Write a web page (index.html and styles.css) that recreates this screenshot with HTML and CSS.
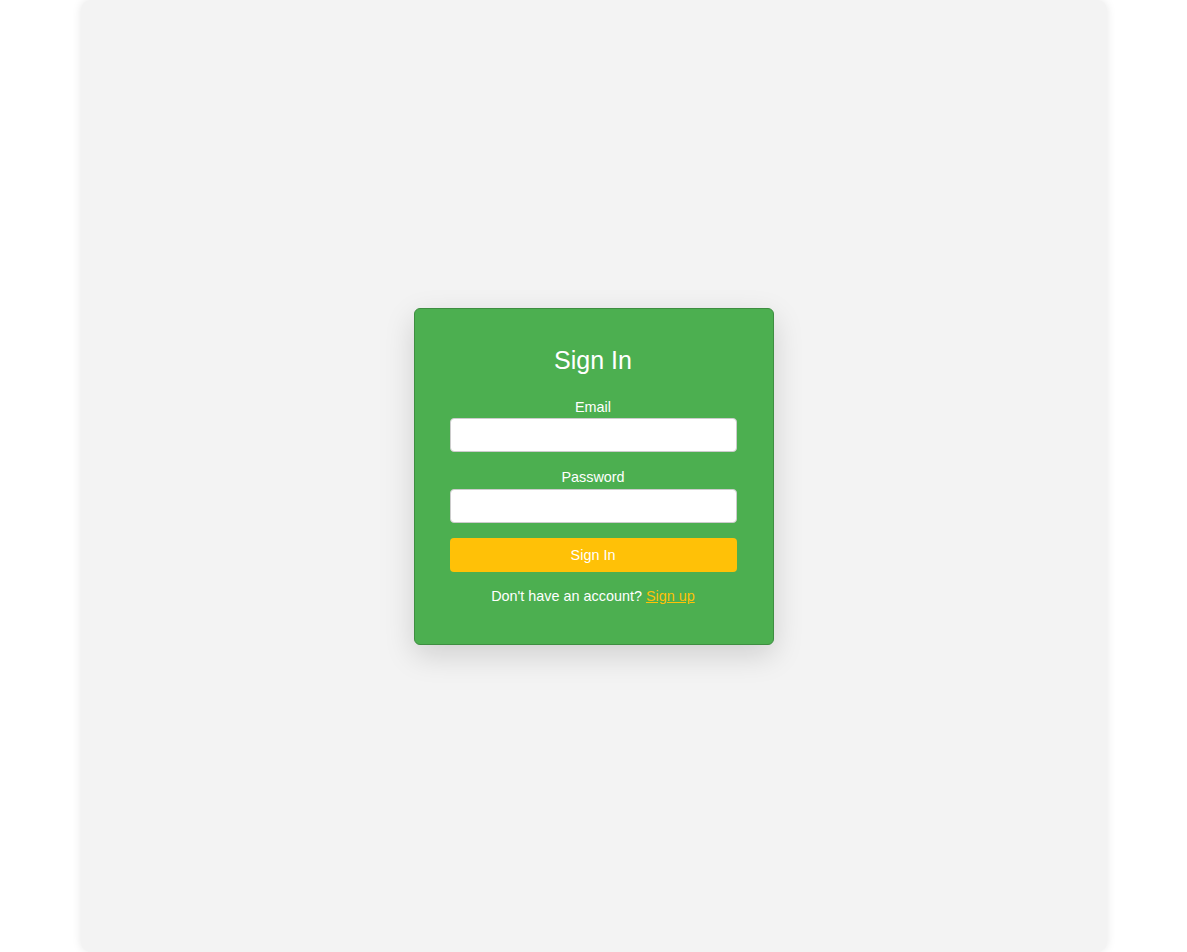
FILE: index.html
```html
<!DOCTYPE html>
<html lang="en">
<head>
<meta charset="utf-8">
<title>Sign In</title>
<link rel="stylesheet" href="styles.css">
</head>
<body>
<div class="page">
  <div class="card">
    <h2 class="title">Sign In</h2>
    <form class="form">
      <label class="label" for="email">Email</label>
      <input class="input input-email" id="email" type="email">
      <label class="label label-password" for="password">Password</label>
      <input class="input input-password" id="password" type="password">
      <button class="btn" type="button">Sign In</button>
    </form>
    <p class="footer">Don't have an account? <a class="link" href="#">Sign up</a></p>
  </div>
</div>
</body>
</html>
```
FILE: styles.css
```css
html, body {
  margin: 0;
  padding: 0;
  background: #ffffff;
  font-family: "Liberation Sans", Arial, sans-serif;
}
.page {
  width: 1026px;
  height: 952px;
  margin: 0 auto;
  background: #f3f3f3;
  border-radius: 10px;
  box-shadow: 0 0 10px rgba(0, 0, 0, 0.1);
  display: flex;
  align-items: center;
  justify-content: center;
}
.card {
  box-sizing: border-box;
  width: 360px;
  background: #4caf50;
  border: 1px solid #3e8e41;
  border-radius: 6px;
  padding: 37px 36px 40px 35px;
  box-shadow: 0 10px 30px rgba(0, 0, 0, 0.15);
  color: #ffffff;
  text-align: center;
}
.title {
  margin: 0 0 25px;
  font-size: 25px;
  font-weight: normal;
  line-height: 28px;
}
.form {
  display: flex;
  flex-direction: column;
}
.label {
  font-size: 14.4px;
  line-height: 16px;
  margin-bottom: 3px;
}
.label-password {
  margin-bottom: 4px;
}
.input {
  box-sizing: border-box;
  height: 34px;
  border: 1px solid #cccccc;
  border-radius: 4px;
  background: #ffffff;
  font-size: 14px;
  padding: 8px;
}
.input-email {
  margin: 0 0 17px;
}
.input-password {
  margin: 0 0 15px;
}
.btn {
  height: 34px;
  border: none;
  border-radius: 4px;
  background: #ffc107;
  color: #ffffff;
  font-family: "Liberation Sans", Arial, sans-serif;
  font-size: 14.4px;
  cursor: pointer;
}
.footer {
  margin: 16px 0 0;
  font-size: 14.4px;
  line-height: 16px;
}
.link {
  color: #ffc107;
}
```
